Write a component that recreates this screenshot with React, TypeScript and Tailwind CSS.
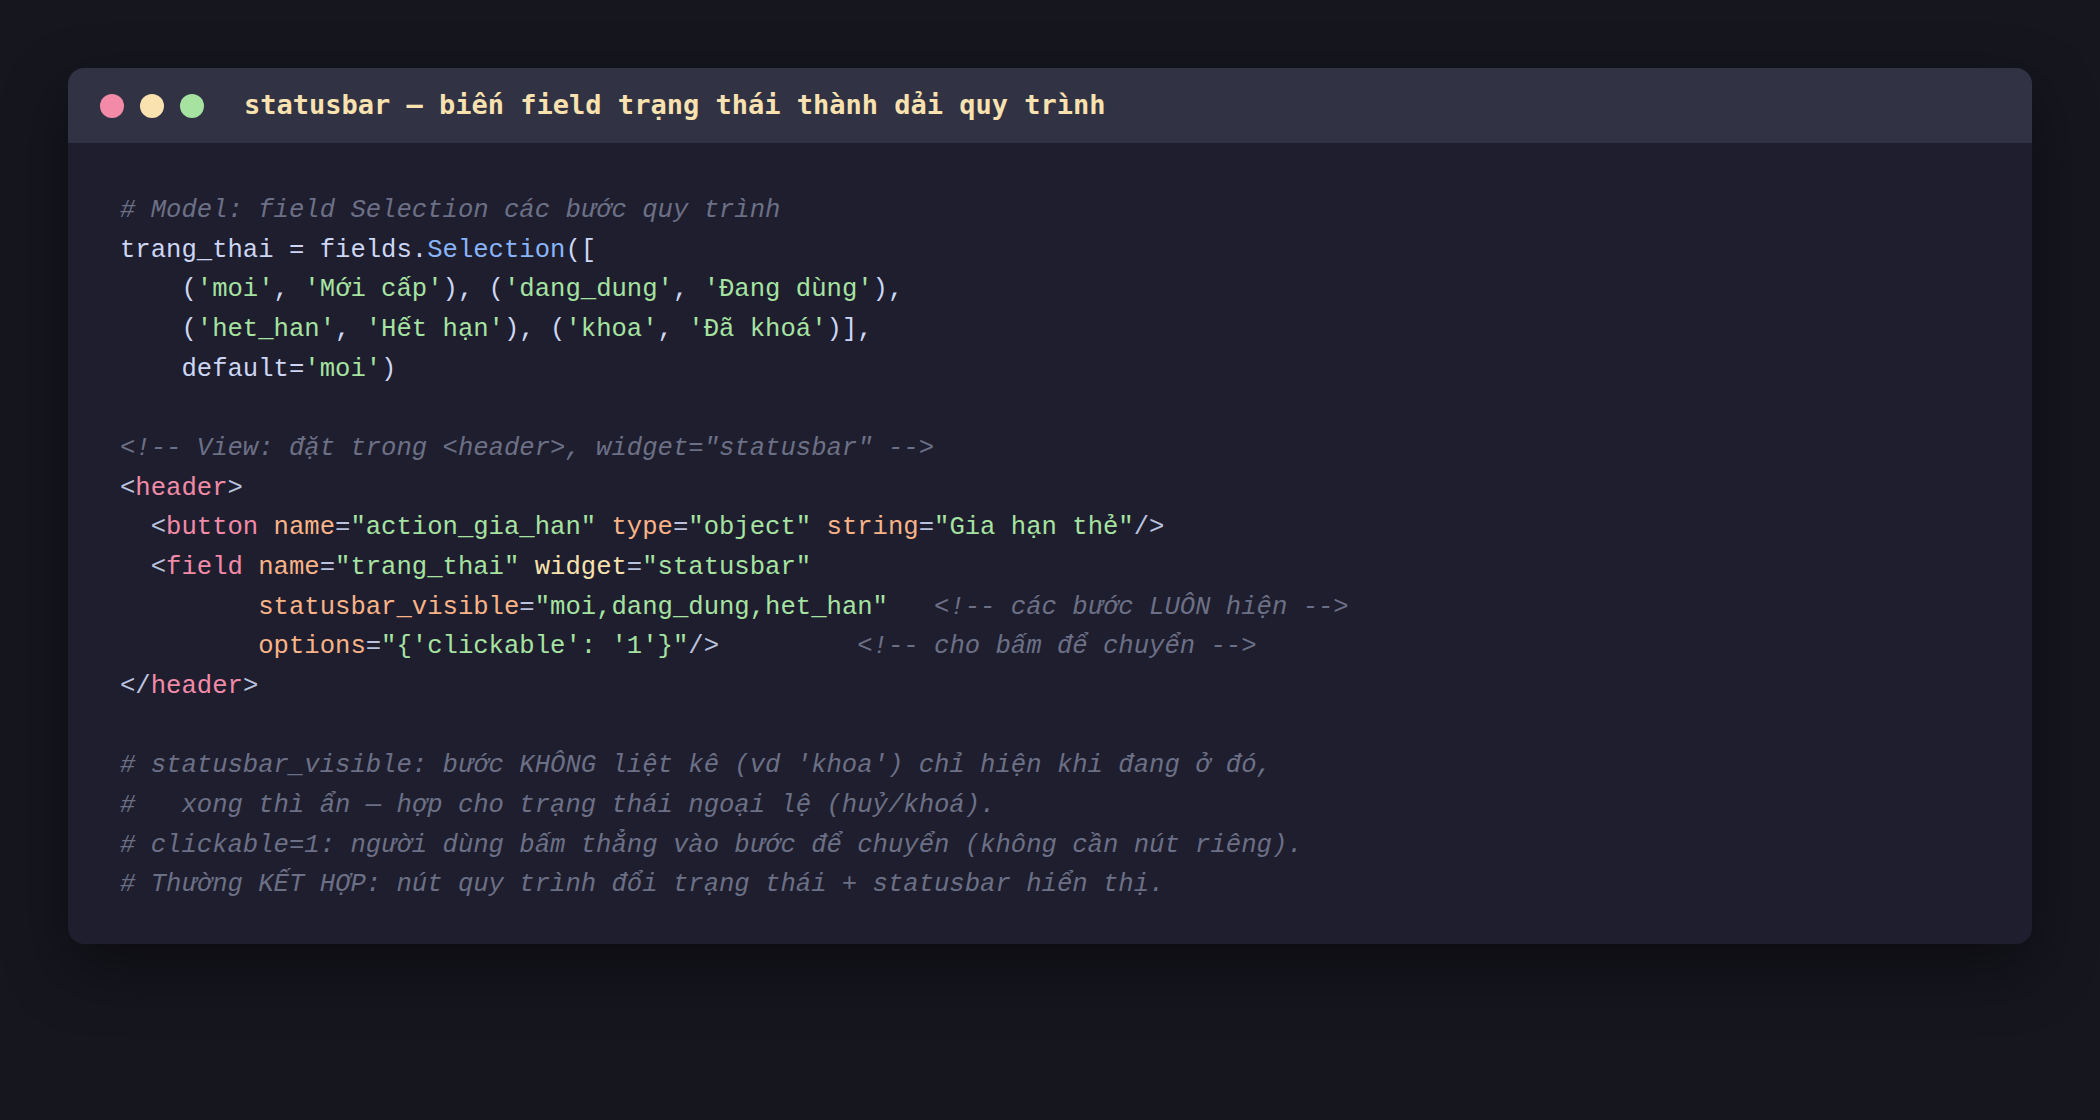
import React from "react";

type Kind = "t" | "c" | "s" | "fn" | "tag" | "attr" | "attr2" | "p";

const kindClass: Record<Kind, string> = {
  t: "text-[#cdd6f4]",
  c: "text-[#6c7086] italic",
  s: "text-[#a6e3a1]",
  fn: "text-[#89b4fa]",
  tag: "text-[#f38ba8]",
  attr: "text-[#fab387]",
  attr2: "text-[#f9e2af]",
  p: "text-[#bac2de]",
};

type Token = [Kind, string];

const lines: Token[][] = [
  [["c", "# Model: field Selection các bước quy trình"]],
  [
    ["t", "trang_thai = fields."],
    ["fn", "Selection"],
    ["t", "(["],
  ],
  [
    ["t", "    ("],
    ["s", "'moi'"],
    ["t", ", "],
    ["s", "'Mới cấp'"],
    ["t", "), ("],
    ["s", "'dang_dung'"],
    ["t", ", "],
    ["s", "'Đang dùng'"],
    ["t", "),"],
  ],
  [
    ["t", "    ("],
    ["s", "'het_han'"],
    ["t", ", "],
    ["s", "'Hết hạn'"],
    ["t", "), ("],
    ["s", "'khoa'"],
    ["t", ", "],
    ["s", "'Đã khoá'"],
    ["t", ")],"],
  ],
  [
    ["t", "    default="],
    ["s", "'moi'"],
    ["t", ")"],
  ],
  [],
  [["c", '<!-- View: đặt trong <header>, widget="statusbar" -->']],
  [
    ["p", "<"],
    ["tag", "header"],
    ["p", ">"],
  ],
  [
    ["p", "  <"],
    ["tag", "button"],
    ["t", " "],
    ["attr", "name"],
    ["p", "="],
    ["s", '"action_gia_han"'],
    ["t", " "],
    ["attr", "type"],
    ["p", "="],
    ["s", '"object"'],
    ["t", " "],
    ["attr", "string"],
    ["p", "="],
    ["s", '"Gia hạn thẻ"'],
    ["p", "/>"],
  ],
  [
    ["p", "  <"],
    ["tag", "field"],
    ["t", " "],
    ["attr", "name"],
    ["p", "="],
    ["s", '"trang_thai"'],
    ["t", " "],
    ["attr2", "widget"],
    ["p", "="],
    ["s", '"statusbar"'],
  ],
  [
    ["t", "         "],
    ["attr", "statusbar_visible"],
    ["p", "="],
    ["s", '"moi,dang_dung,het_han"'],
    ["t", "   "],
    ["c", "<!-- các bước LUÔN hiện -->"],
  ],
  [
    ["t", "         "],
    ["attr", "options"],
    ["p", "="],
    ["s", "\"{'clickable': '1'}\""],
    ["p", "/>"],
    ["t", "         "],
    ["c", "<!-- cho bấm để chuyển -->"],
  ],
  [
    ["p", "</"],
    ["tag", "header"],
    ["p", ">"],
  ],
  [],
  [["c", "# statusbar_visible: bước KHÔNG liệt kê (vd 'khoa') chỉ hiện khi đang ở đó,"]],
  [["c", "#   xong thì ẩn — hợp cho trạng thái ngoại lệ (huỷ/khoá)."]],
  [["c", "# clickable=1: người dùng bấm thẳng vào bước để chuyển (không cần nút riêng)."]],
  [["c", "# Thường KẾT HỢP: nút quy trình đổi trạng thái + statusbar hiển thị."]],
];

export default function App() {
  return (
    <div className="min-h-screen w-full bg-[#16161f] px-[68px] pt-[68px] pb-[176px]">
      <div className="overflow-hidden rounded-[16px] bg-[#1e1e2e] shadow-[0_24px_64px_rgba(0,0,0,0.45)]">
        {/* barra de título */}
        <div className="flex h-[75px] items-center bg-[#313244] pl-[32px]">
          <div className="flex items-center gap-4">
            <span className="h-6 w-6 rounded-full bg-[#f38ba8]" />
            <span className="h-6 w-6 rounded-full bg-[#f9e2af]" />
            <span className="h-6 w-6 rounded-full bg-[#a6e3a1]" />
          </div>
          <div className="ml-[40px] font-['DejaVu_Sans_Mono',monospace] text-[27px] font-bold text-[#f9e2af]">
            statusbar — biến field trạng thái thành dải quy trình
          </div>
        </div>

        {/* código */}
        <pre className="m-0 px-[52px] pt-[48px] pb-[39px] font-['Liberation_Mono',monospace] text-[25.6px] leading-[1.55]">
          {lines.map((line, i) => (
            <div key={i} className="h-[39.68px] whitespace-pre">
              {line.map(([k, txt], j) => (
                <span key={j} className={kindClass[k]}>
                  {txt}
                </span>
              ))}
            </div>
          ))}
        </pre>
      </div>
    </div>
  );
}
